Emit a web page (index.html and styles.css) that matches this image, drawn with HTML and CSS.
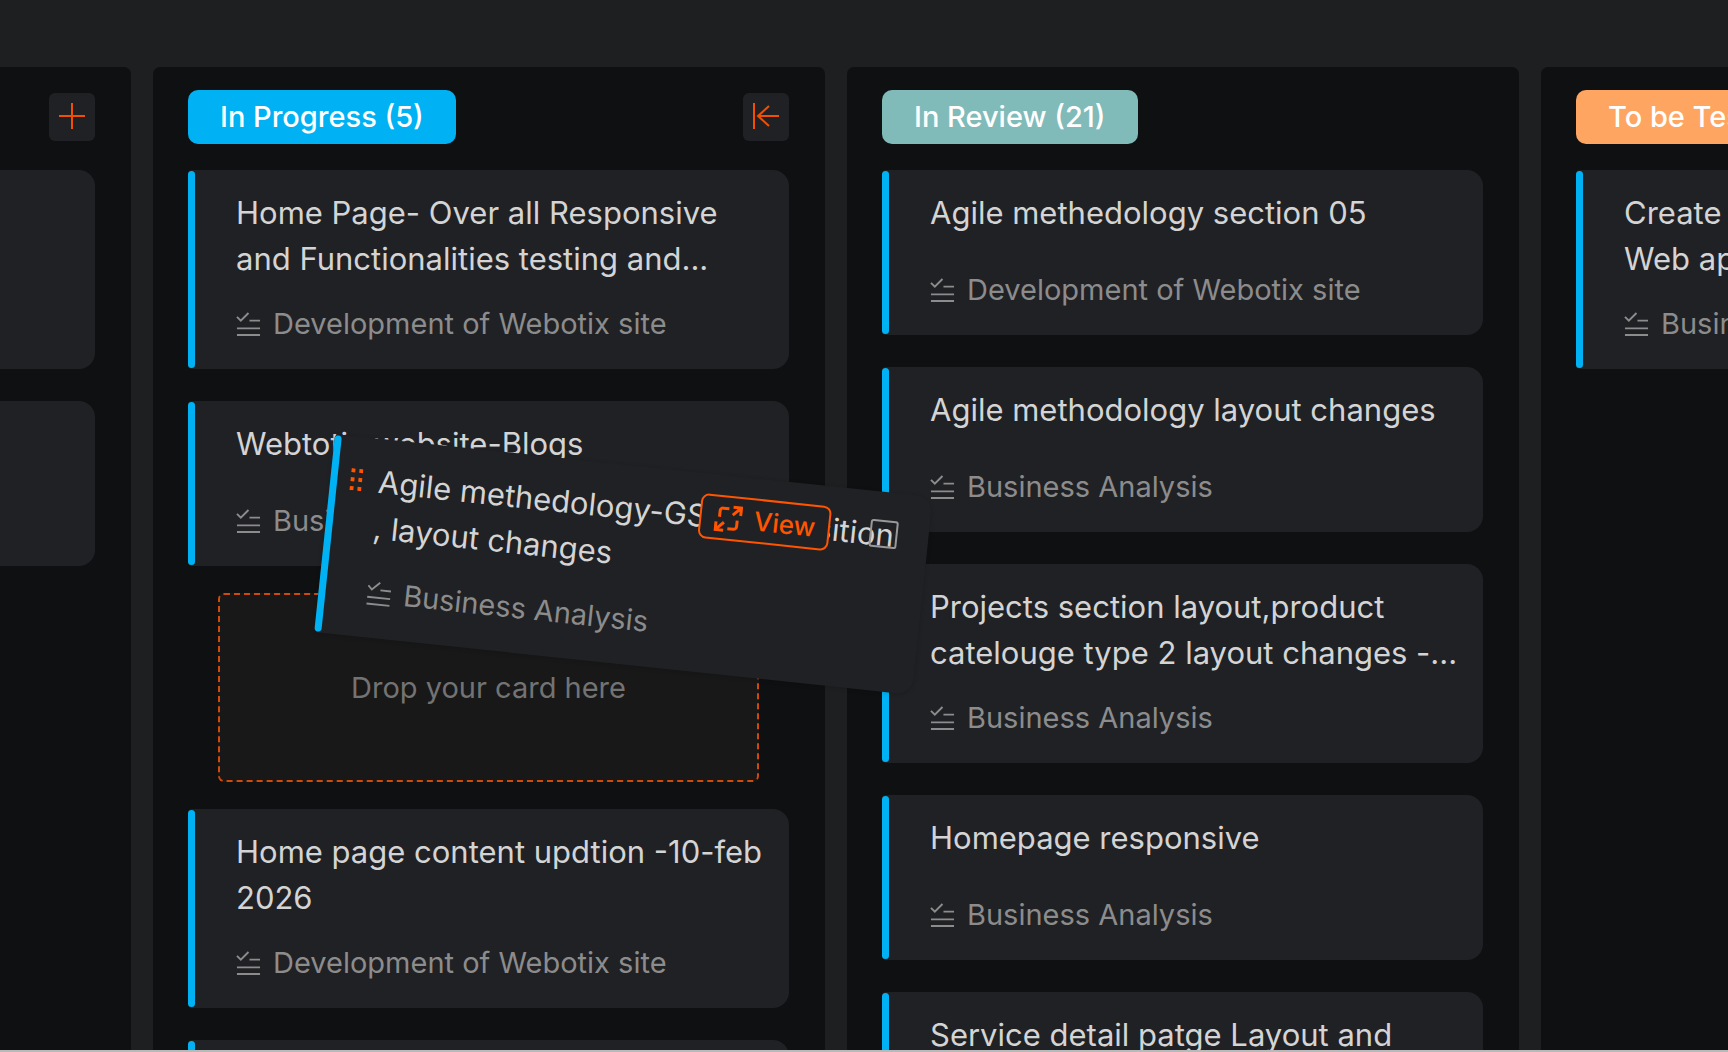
FILE: index.html
```html
<!DOCTYPE html>
<html lang="en">
<head>
    <meta charset="UTF-8">
    <meta name="viewport" content="width=device-width, initial-scale=1.0">
    <title>Task Board</title>
    <link rel="stylesheet" href="styles.css">
</head>
<body>
    <svg class="sprite" aria-hidden="true">
        <symbol id="icon-list" viewBox="0 0 26 26">
            <path d="M1 5l4 4 8-8M14 9h11M1 17h24M1 24h24"/>
        </symbol>
    </svg>

    <main class="board">
        <section class="column">
            <header class="column-header">
                <button type="button" class="icon-btn" aria-label="Add card">
                    <svg viewBox="0 0 26 26"><path d="M13 0v26M0 13h26"/></svg>
                </button>
            </header>
            <article class="card tall"></article>
            <article class="card"></article>
        </section>

        <section class="column">
            <header class="column-header">
                <h2 class="status status-progress">In Progress (5)</h2>
                <button type="button" class="icon-btn" aria-label="Collapse column">
                    <svg viewBox="0 0 26 26"><path d="M1 0v26M26 13H5M16 3L5 13l11 10"/></svg>
                </button>
            </header>
            <article class="card">
                <h3 class="card-title">Home Page- Over all Responsive<br>and Functionalities testing and...</h3>
                <p class="card-list"><svg class="list-icon"><use href="#icon-list"/></svg>Development of Webotix site</p>
            </article>
            <article class="card">
                <h3 class="card-title">Webtotix website-Blogs</h3>
                <p class="card-list"><svg class="list-icon"><use href="#icon-list"/></svg>Business Analysis</p>
            </article>
            <div class="drop-zone">Drop your card here</div>
            <article class="card">
                <h3 class="card-title">Home page content updtion -10-feb<br>2026</h3>
                <p class="card-list"><svg class="list-icon"><use href="#icon-list"/></svg>Development of Webotix site</p>
            </article>
            <article class="card"></article>
        </section>

        <section class="column">
            <header class="column-header">
                <h2 class="status status-review">In Review (21)</h2>
            </header>
            <article class="card">
                <h3 class="card-title">Agile methedology section 05</h3>
                <p class="card-list"><svg class="list-icon"><use href="#icon-list"/></svg>Development of Webotix site</p>
            </article>
            <article class="card">
                <h3 class="card-title">Agile methodology layout changes</h3>
                <p class="card-list"><svg class="list-icon"><use href="#icon-list"/></svg>Business Analysis</p>
            </article>
            <article class="card">
                <h3 class="card-title">Projects section layout,product<br>catelouge type 2 layout changes -...</h3>
                <p class="card-list"><svg class="list-icon"><use href="#icon-list"/></svg>Business Analysis</p>
            </article>
            <article class="card">
                <h3 class="card-title">Homepage responsive</h3>
                <p class="card-list"><svg class="list-icon"><use href="#icon-list"/></svg>Business Analysis</p>
            </article>
            <article class="card">
                <h3 class="card-title">Service detail patge Layout and</h3>
            </article>
        </section>

        <section class="column">
            <header class="column-header">
                <h2 class="status status-test">To be Tested (1)</h2>
            </header>
            <article class="card">
                <h3 class="card-title">Create<br>Web app</h3>
                <p class="card-list"><svg class="list-icon"><use href="#icon-list"/></svg>Business Analysis</p>
            </article>
        </section>
    </main>

    <!-- card being dragged over the board -->
    <article class="card dragging">
        <svg class="drag-handle" viewBox="0 0 12 22">
            <path d="M0 0h4v4H0zM8 0h4v4H8zM0 9h4v4H0zM8 9h4v4H8zM0 18h4v4H0zM8 18h4v4H8z"/>
        </svg>
        <h3 class="card-title">Agile methedology-GS composition<br>, layout changes</h3>
        <p class="card-list"><svg class="list-icon"><use href="#icon-list"/></svg>Business Analysis</p>
        <input type="checkbox" class="card-check" aria-label="Select card">
        <button type="button" class="view-btn">
            <svg viewBox="0 0 28 28"><path d="M5 13V7a3 3 0 0 1 3-3h6M23 15v6a3 3 0 0 1-3 3h-6M18 10l8-8M18 2h8v8M10 18l-8 8M2 18v8h8"/></svg>
            View
        </button>
    </article>
</body>
</html>
```

FILE: styles.css
```css
* {
    box-sizing: border-box;
}
body {
    background-color: #1e1f21;
    margin: 0;
    height: 100vh;
    overflow: hidden;
    border-bottom: 2px solid #b9b9b9;
    font-family: Inter, "Liberation Sans", sans-serif;
    font-size: 29px;
    color: #d4d4d4;
}
h2, h3, p {
    margin: 0;
    font-weight: 400;
}
svg {
    fill: none;
    stroke: currentColor;
    stroke-width: 2;
}
.sprite {
    display: none;
}

/* board, scrolled part way into the first column */
.board {
    display: flex;
    gap: 22px;
    height: 100%;
    padding-top: 67px;
    margin-left: -541px;
    overflow: hidden;
}
.column {
    flex: 0 0 672px;
    display: flex;
    flex-direction: column;
    gap: 32px;
    padding: 23px 36px 0 35px;
    background: #0e1011;
    border-radius: 7px 7px 0 0;
}
.column-header {
    display: flex;
    align-items: center;
    height: 54px;
    margin-bottom: -6px;
}
.status {
    padding: 0 32px;
    border-radius: 10px;
    font-size: 29px;
    line-height: 54px;
    font-weight: 500;
    color: #fff;
    white-space: nowrap;
}
.status-progress {
    background: #00b2f3;
}
.status-review {
    background: #80bbba;
}
.status-test {
    background: #ffa562;
}
.icon-btn {
    display: flex;
    align-items: center;
    justify-content: center;
    width: 46px;
    height: 48px;
    margin-left: auto;
    padding: 0 0 2px;
    border: none;
    border-radius: 6px;
    background: #202124;
    color: #f25000;
    cursor: pointer;
}
.icon-btn svg {
    width: 26px;
    height: 26px;
}

/* cards */
.card {
    flex: none;
    position: relative;
    min-height: 165px;
    padding: 20px 18px 22px 48px;
    border-radius: 4px 16px 16px 4px;
    background: #202124;
}
.card::before {
    content: "";
    position: absolute;
    left: 0;
    top: 1px;
    bottom: 1px;
    width: 7px;
    border-radius: 4px;
    background: #00b2f3;
}
.card.tall {
    min-height: 199px;
}
.card-title {
    min-height: 58px;
    font-size: 31px;
    line-height: 46px;
    white-space: nowrap;
}
.card-list {
    display: flex;
    align-items: center;
    gap: 12px;
    margin-top: 19px;
    line-height: 46px;
    color: #8c8c8c;
    white-space: nowrap;
}
.list-icon {
    width: 25px;
    height: 25px;
}
.drop-zone {
    flex: none;
    display: flex;
    align-items: center;
    justify-content: center;
    height: 189px;
    margin: -5px 30px;
    border: 2px dashed #d24a0a;
    border-radius: 6px;
    background: #181818;
    color: #737373;
}

/* dragged card */
.dragging {
    position: absolute;
    left: 323px;
    top: 465px;
    width: 601px;
    transform: rotate(6deg);
    box-shadow: 0 1px 4px rgba(0, 0, 0, 0.15);
}
.drag-handle {
    position: absolute;
    left: 20px;
    top: 32px;
    width: 12px;
    height: 22px;
    fill: #ff5500;
    stroke: none;
}
.card-check {
    position: absolute;
    right: 31px;
    top: 28px;
    width: 28px;
    height: 28px;
    margin: 0;
    appearance: none;
    border: 2px solid #999;
    border-radius: 3px;
}
.view-btn {
    position: absolute;
    right: 99px;
    top: 20px;
    display: flex;
    align-items: center;
    justify-content: center;
    gap: 12px;
    width: 131px;
    height: 45px;
    padding: 0;
    border: 2px solid #ff5500;
    border-radius: 8px;
    background: #202124;
    color: #ff5500;
    font-family: inherit;
    font-size: 26px;
    font-weight: 500;
    cursor: pointer;
}
.view-btn svg {
    width: 28px;
    height: 28px;
    stroke-width: 3;
}
```
